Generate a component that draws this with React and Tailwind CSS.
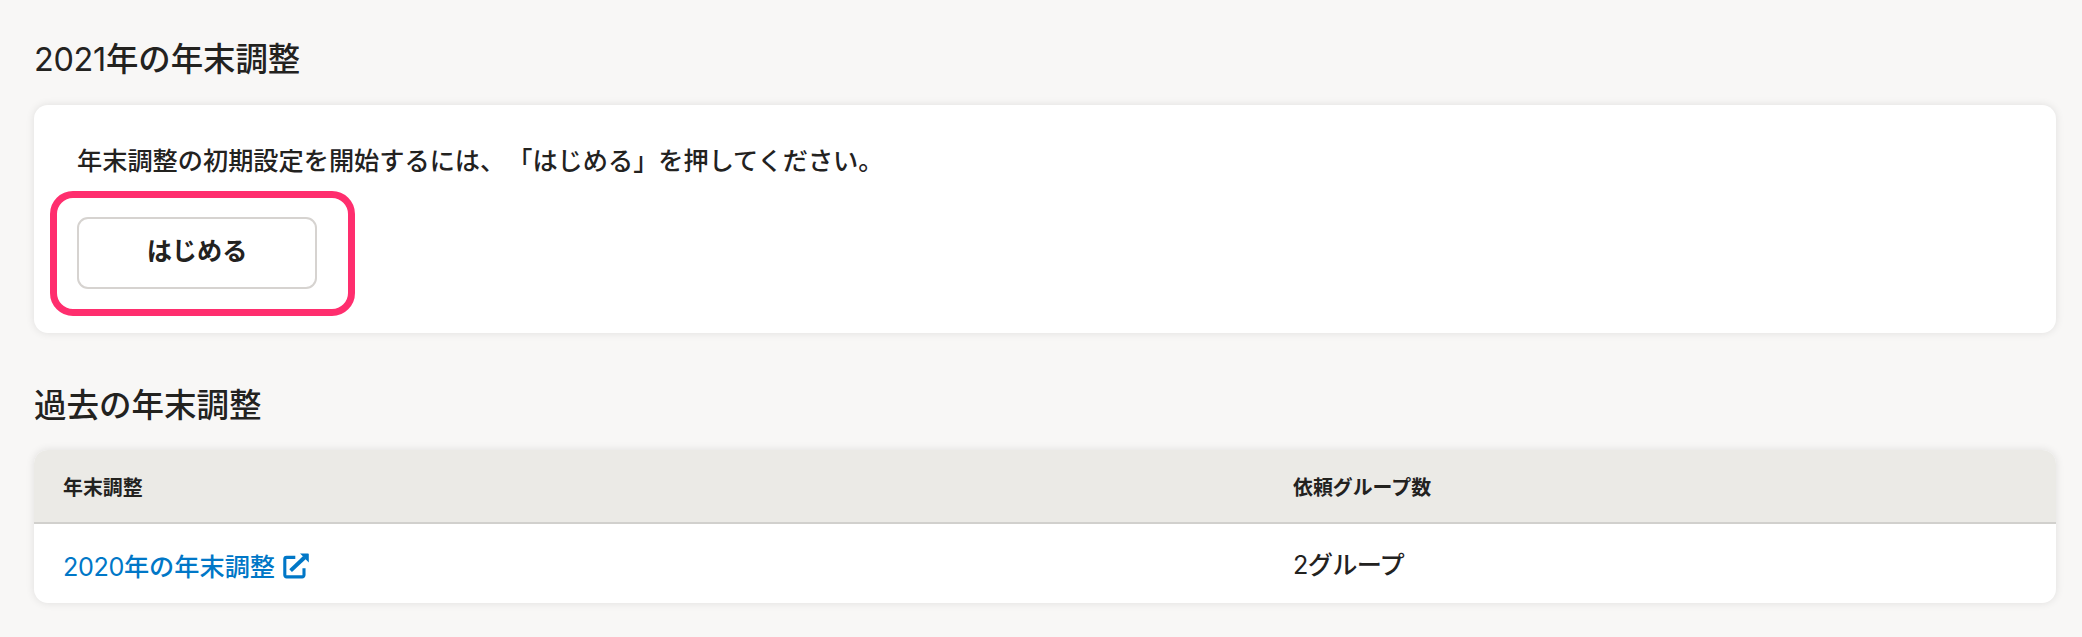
const panel = "rounded-[14px] shadow-[0_0_8px_rgba(3,3,2,0.1)]";

function ExternalLinkIcon() {
  return (
    <svg width="26" height="26" viewBox="0 0 26 26" fill="none" className="-mt-[3px] shrink-0" aria-hidden="true">
      <path
        d="M12.3 4.4H3.6A1.8 1.8 0 0 0 1.8 6.2V22.1A1.8 1.8 0 0 0 3.6 23.9H19.2A1.8 1.8 0 0 0 21 22.1V15.3"
        stroke="#0077c7"
        strokeWidth="3.1"
      />
      <path d="M7.6 17.6L21.5 4.5" stroke="#0077c7" strokeWidth="4" />
      <path d="M17 0.4H25Q25.8 0.4 25.8 1.2V9.4L22.8 6.6L19.6 3Z" fill="#0077c7" />
    </svg>
  );
}

export default function App() {
  return (
    <main className="flex h-[637px] w-[2082px] flex-col bg-[#f8f7f6] pl-[34px] pr-[26px] pt-[35px] font-['Inter','Noto_Sans_CJK_JP',sans-serif] text-[25.2px] font-medium text-[#23221f] [text-spacing-trim:space-all]">
      <h2 className="h-[48px] text-[32.4px] leading-[50px]">
        <span className="font-normal tracking-[-0.3px]">2021</span>年の年末調整
      </h2>
      <section className={`mt-[22px] h-[228px] bg-white px-[43px] pt-[36px] ${panel}`}>
        <p className="h-[40px] leading-[40px]">
          年末調整の初期設定を開始するには、<span className="ml-[2px]">「はじめる」を押してください。</span>
        </p>
        <div className="-ml-[27px] mt-[10px] flex h-[125px] w-[305px] rounded-[23px] border-[7px] border-[#ff2e6e] pl-[20px] pt-[19px]">
          <button className="h-[72px] w-[240px] rounded-[11px] border-2 border-[#d6d3d0] bg-white pb-[2px] font-bold">
            はじめる
          </button>
        </div>
      </section>
      <h2 className="mt-[48px] h-[48px] text-[32.5px] leading-[50px]">過去の年末調整</h2>
      <div className={`mt-[21px] h-[153px] overflow-hidden bg-white ${panel}`}>
        <div className="grid h-[74px] grid-cols-[1230px_1fr] items-center border-b-2 border-[#d1d0cd] bg-[#ebeae6] pl-[29px] pt-[5px] text-[19.9px] font-bold">
          <div>年末調整</div>
          <div>依頼グループ数</div>
        </div>
        <div className="grid h-[79px] grid-cols-[1230px_1fr] items-center pl-[29px]">
          <a href="#" className="flex items-center gap-[8px] pt-[9px] text-[#0077c7]">
            <span>
              <span className="font-normal tracking-[-0.4px]">2020</span>年の年末調整
            </span>
            <ExternalLinkIcon />
          </a>
          <div className="pt-[5px] tracking-[-0.7px]">
            <span className="font-normal">2</span>グループ
          </div>
        </div>
      </div>
    </main>
  );
}
